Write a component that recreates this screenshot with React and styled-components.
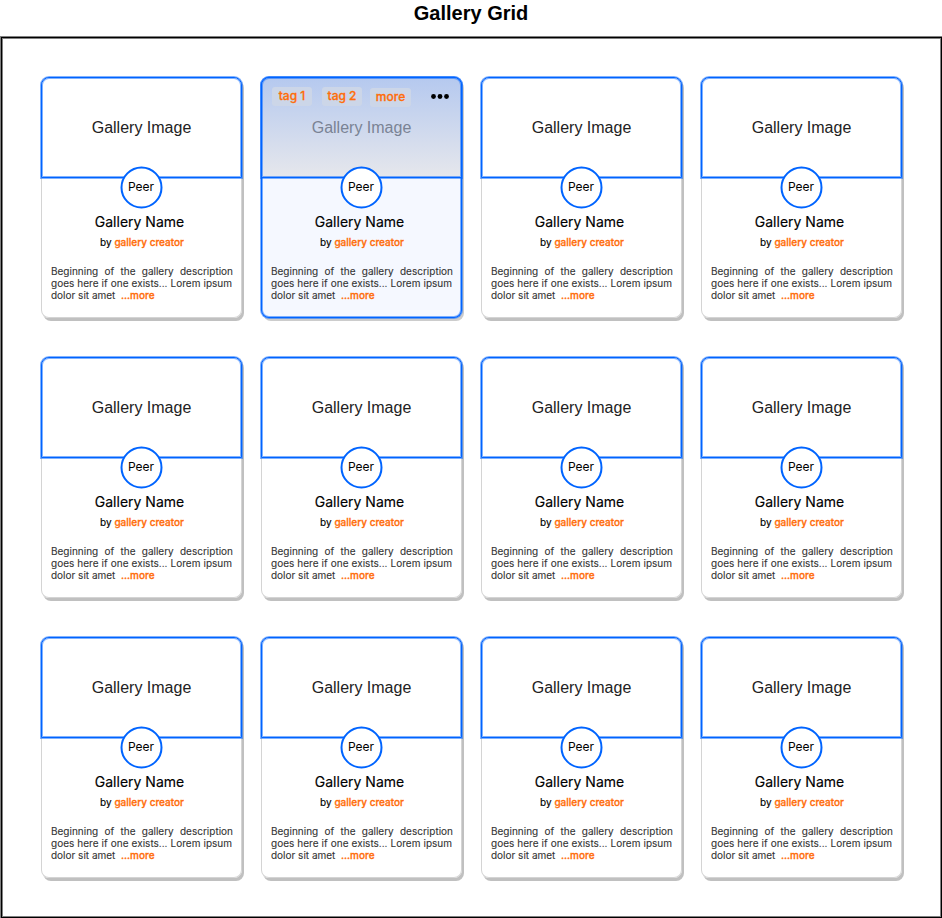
import React from "react";
import styled, { createGlobalStyle, css } from "styled-components";

const BLUE = "#0064ff";
const ORANGE = "#ff6d0a";

const GlobalStyle = createGlobalStyle`
  * { box-sizing: border-box; }
  body { margin: 0; background: #fff; overflow: hidden; }
`;

const Page = styled.div`
  width: 942px;
  height: 918px;
  display: flex;
  flex-direction: column;
  font-family: Inter, "Liberation Sans", sans-serif;
  color: #000;
`;

const Title = styled.h1`
  flex: none;
  margin: 0;
  height: 37px;
  padding-top: 1px;
  font: bold 20px/24px "Liberation Sans", Arial, sans-serif;
  text-align: center;
`;

const Frame = styled.main`
  flex: 1;
  margin: 0 0 0 1px;
  border: 1px solid #000;
  box-shadow: 0 0 0 1px #808080, inset 0 0 0 1px #808080;
  padding: 39px;
  display: grid;
  grid-template-columns: repeat(4, 201px);
  grid-auto-rows: 241px;
  gap: 39px 19px;
`;

const CardBox = styled.article`
  position: relative;
  display: flex;
  flex-direction: column;
  align-items: center;
  border-radius: 8px;
  background: #fff;
  box-shadow: inset 0 0 0 1px #d4d4d4, 2px 3px 0 0 #c0c0c0;
  ${(p) =>
    p.$active &&
    css`
      background: #f5f8ff;
      box-shadow: 0 0 0 1px rgba(0, 100, 255, 0.5), inset 0 0 0 1px ${BLUE},
        inset 0 0 0 2px rgba(0, 100, 255, 0.5), 2px 3px 0 0 #cccccc;
    `}
`;

const Cover = styled.div`
  flex: none;
  width: 201px;
  height: 101px;
  border: 1px solid ${BLUE};
  box-shadow: 0 0 0 1px rgba(0, 100, 255, 0.5), inset 0 0 0 1px rgba(0, 100, 255, 0.5);
  border-radius: 8px 8px 0 0;
  background: ${(p) => (p.$active ? "linear-gradient(#b5c9ef, #e6e7ec)" : "#fff")};
  color: ${(p) => (p.$active ? "#7a8394" : "#222")};
  font: 16px/20px "Liberation Sans", Arial, sans-serif;
  display: flex;
  align-items: center;
  justify-content: center;
`;

const Overlay = styled.div`
  position: absolute;
  top: 10px;
  left: 11px;
  right: 13px;
  display: flex;
  align-items: flex-start;
`;

const Tag = styled.span`
  width: ${(p) => p.$width}px;
  height: 19px;
  margin-right: ${(p) => p.$gap}px;
  margin-top: ${(p) => p.$drop || 0}px;
  border-radius: 3px;
  background: #ccd6e8;
  color: ${ORANGE};
  font-size: 12px;
  font-weight: 500;
  line-height: 17px;
  text-align: center;
  -webkit-text-stroke: 0.3px ${ORANGE};
`;

const Dots = styled.svg`
  width: 18px;
  height: 5px;
  margin: 7px 0 0 auto;
`;

const Peer = styled.div`
  position: relative;
  z-index: 1;
  flex: none;
  width: 43px;
  height: 43px;
  margin-top: -12px;
  padding-right: 1px;
  font-size: 12px;
  line-height: 42px;
  text-align: center;
`;

const Ring = styled.svg`
  position: absolute;
  inset: 0;
  z-index: -1;
  width: 43px;
  height: 43px;
`;

const Name = styled.h2`
  margin: 3px 4px 0 0;
  font-size: 14px;
  font-weight: 400;
  line-height: 20px;
  -webkit-text-stroke: 0.15px #000;
`;

const Byline = styled.div`
  margin: 2px 0 0 1px;
  font-size: 10px;
  line-height: 16px;
  -webkit-text-stroke: 0.15px currentColor;
`;

const Accent = styled.span`
  color: ${ORANGE};
  font-weight: 500;
  -webkit-text-stroke: 0.3px ${ORANGE};
`;

const Description = styled.p`
  width: 182px;
  margin: 15px 0 0 1px;
  color: #333;
  font-size: 10px;
  line-height: 12px;
  -webkit-text-stroke: 0.1px #333;
`;

const Line = styled.span`
  display: block;
  width: ${(p) => p.$width || 182}px;
  white-space: ${(p) => (p.$justify ? "normal" : "pre")};
  text-align-last: ${(p) => (p.$justify ? "justify" : "left")};
`;

function GalleryCard({ active }) {
  return (
    <CardBox $active={active}>
      <Cover $active={active}>Gallery Image</Cover>
      {active && (
        <Overlay>
          <Tag $width={40} $gap={10}>tag 1</Tag>
          <Tag $width={40} $gap={8}>tag 2</Tag>
          <Tag $width={41} $gap={0} $drop={1}>more</Tag>
          <Dots viewBox="0 0 18 5">
            <circle cx="2.5" cy="2.5" r="2.4" />
            <circle cx="9" cy="2.5" r="2.4" />
            <circle cx="15.5" cy="2.5" r="2.4" />
          </Dots>
        </Overlay>
      )}
      <Peer>
        <Ring viewBox="0 0 43 43">
          <circle cx="21.5" cy="21.5" r="20" fill="#fff" stroke={BLUE} strokeWidth="2" />
        </Ring>
        Peer
      </Peer>
      <Name>Gallery Name</Name>
      <Byline>
        by <Accent>gallery creator</Accent>
      </Byline>
      <Description>
        <Line $justify>Beginning of the gallery description</Line>
        <Line $justify $width={181}>goes here if one exists... Lorem ipsum</Line>
        <Line>
          {"dolor sit amet  "}
          <Accent>...more</Accent>
        </Line>
      </Description>
    </CardBox>
  );
}

export default function App() {
  return (
    <Page>
      <GlobalStyle />
      <Title>Gallery Grid</Title>
      <Frame>
        {Array.from({ length: 12 }, (_, i) => (
          <GalleryCard key={i} active={i === 1} />
        ))}
      </Frame>
    </Page>
  );
}
